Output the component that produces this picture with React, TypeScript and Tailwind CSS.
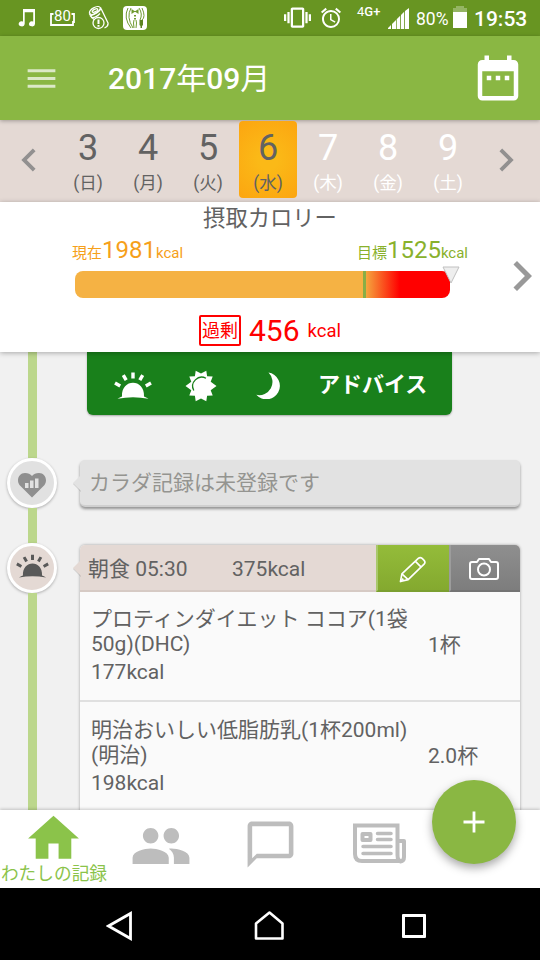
import clsx from 'clsx'
import {
  MdAlarm,
  MdChatBubbleOutline,
  MdChevronLeft,
  MdChevronRight,
  MdDateRange,
  MdHome,
  MdMenu,
  MdPeople,
  MdVibration,
} from 'react-icons/md'

const days = [
  { day: 3, week: '日' },
  { day: 4, week: '月' },
  { day: 5, week: '火' },
  { day: 6, week: '水', selected: true },
  { day: 7, week: '木', future: true },
  { day: 8, week: '金', future: true },
  { day: 9, week: '土', future: true },
]

const foods = [
  {
    lines: ['プロティンダイエット ココア(1袋', '50g)(DHC)'],
    kcal: '177kcal',
    amount: '1杯',
  },
  {
    lines: ['明治おいしい低脂肪乳(1杯200ml)', '(明治)'],
    kcal: '198kcal',
    amount: '2.0杯',
  },
]

function SunriseIcon({ className }: { className?: string }) {
  return (
    <svg viewBox="0 0 38 28" className={className} fill="currentColor">
      <path d="M8 24.500C7 6 31 6 30 24.500q2 .8 4.500 2.300Q19 23.600 3.500 26.800 6 25.300 8 24.500z" />
      <path
        d="M19 .5v6M9.300 3.200l2.900 5M28.700 3.200l-2.900 5M1 11l5.200 3M37 11l-5.200 3"
        fill="none"
        stroke="currentColor"
        strokeWidth="3.400"
      />
    </svg>
  )
}

function SunIcon() {
  return (
    <svg viewBox="0 0 32 32" className="size-8" fill="#fff">
      <path d="M16 3.500l5.300-2.700.8 5.500 5.600.2-2 5.200L31.500 16l-5.800 4.300 2 5.200-5.600.2-.8 5.500L16 28.500l-5.300 2.700-.8-5.500-5.600-.2 2-5.200L.5 16l5.800-4.300-2-5.200 5.600-.2.8-5.500z" />
      <path
        d="M8.800 20.500A9 9 0 0 1 21 8.300"
        fill="none"
        stroke="#19801b"
        strokeWidth="1.300"
      />
    </svg>
  )
}

function MoonIcon() {
  return (
    <svg viewBox="0 0 24 27" className="h-[27px] w-6" fill="#fff">
      <path d="M12.500.5a13.500 13.500 0 1 1-12.200 22.300A13.200 13.200 0 0 0 12.500.5z" />
    </svg>
  )
}

function StatusBar() {
  return (
    <div className="flex h-9 items-start bg-[#689522] text-white">
      <svg viewBox="0 0 18 18" className="mt-[9px] ml-[18px] size-[18px]" fill="#fff">
        <path d="M5 0h12v15a3 2.500 0 1 1-1.800-2.400V3.200H6.700V15A3 2.500 0 1 1 5 12.600z" />
      </svg>
      <div className="relative mt-[9px] ml-[14px] h-[18px] w-[26px]">
        <svg viewBox="0 0 26 18" className="h-[18px] w-[26px]" fill="none">
          <path
            d="M3.500 5H1v11h22v-3h1V5h-2.500"
            stroke="#fff"
            strokeWidth="1.800"
          />
        </svg>
        <span className="absolute top-0 left-[4px] text-[15px] leading-[14px]">
          80
        </span>
      </div>
      <svg viewBox="0 0 21 24" className="mt-[6px] ml-[12px] h-6 w-[21px]">
        <g fill="none" stroke="#fff" strokeWidth="1.300">
          <ellipse cx="7" cy="4.500" rx="6" ry="3" transform="rotate(-28 7 4.500)" />
          <ellipse cx="7" cy="4.500" rx="3" ry="1.200" transform="rotate(-28 7 4.500)" />
          <path d="M1.300 7.500q1.500 4 7-1 4-2 4.500-5M2 9.500l4 4M13 2.500l7 14.500q.5 3-3.500 5M3 11.500q4 1 9-4" />
          <circle cx="10.500" cy="17" r="5.500" />
        </g>
        <path d="M10.500 13.500v4.500M10.500 19v1.800" stroke="#fff" strokeWidth="2" />
      </svg>
      <svg viewBox="0 0 24 24" className="mt-[6px] ml-[14px] size-6">
        <rect width="24" height="24" rx="4" fill="#fff" />
        <g fill="none" stroke="#6f9a30" strokeWidth="1">
          <path d="M5 2Q0 12 8 22M8 2q-5 9 2 20M19 2q4 9 0 12M16 2q4 6 1 12" />
          <path d="M11 14l-.5 3 .5 5M13 14l.5 3-.5 5" />
        </g>
        <path
          d="M8.500 3l3 2h1l3-2v5l-3-2h-1l-3 2zM11 9h2v1.500h-2zM11 12h2v1.500h-2z"
          fill="#6f9a30"
        />
        <path d="M16.500 14H20v5l-1 1v2h-1.500v-2l-1-1z" fill="#5c8422" />
      </svg>

      <MdVibration className="mt-[4px] ml-[137px] size-[27px]" />
      <MdAlarm className="mt-[6px] ml-[8px] size-6" />
      <span className="mt-[5px] ml-[14px] w-[26px] text-[13px] leading-[14px]">
        4<span className="font-medium">G+</span>
      </span>
      <svg viewBox="0 0 21 21" className="mt-[8px] ml-[5px] size-[21px]" fill="#fff">
        <path d="M0 21v-1l3-3v4zM4 21v-5l4-4v9zM8.700 21V11.300l3.500-3.500V21zM13 21V7l3.200-3.200V21zM17 21V3l4-3v21z" />
      </svg>
      <span className="mt-[9px] ml-[7px] w-[34px] text-[17.500px] leading-5">
        80%
      </span>
      <svg viewBox="0 0 14 22" className="mt-[6px] ml-[3px] h-[22px] w-[14px]">
        <path d="M3 0h8v2h3v5H0V2h3z" fill="#fff" opacity=".3" />
        <path d="M0 6h14v16H0z" fill="#fff" />
      </svg>
      <span className="mt-[8px] ml-[7px] text-[21px] leading-[22px] font-medium">
        19:53
      </span>
    </div>
  )
}

function Header() {
  return (
    <header className="relative z-20 flex h-[84px] items-center bg-[#8ab743] text-white shadow-[0_1px_4px_rgba(0,0,0,0.3)]">
      <MdMenu className="ml-[23px] size-[37px] opacity-70" />
      <h1 className="mt-[2px] ml-12 flex-1 text-[30px] leading-9 font-medium">
        2017<span className="font-normal">年</span>09
        <span className="font-normal">月</span>
      </h1>
      <MdDateRange className="mr-[15px] size-[54px]" />
    </header>
  )
}

function DateStrip() {
  return (
    <div className="flex h-[82px] bg-[#e4d9d4] text-[#626262]">
      <MdChevronLeft className="mt-[17px] ml-[6px] size-[46px] text-[#929090]" />
      <div className="ml-[6px] flex">
        {days.map((d) => (
          <div
            key={d.day}
            className={clsx(
              'mx-px mt-px flex h-[77px] w-[58px] flex-col items-center rounded-[4px]',
              d.selected &&
                'relative z-20 bg-[radial-gradient(circle,#fbb917_20%,#fca510_100%)]',
              d.future && 'text-white'
            )}
          >
            <span className="mt-[9px] text-[36px] leading-9">{d.day}</span>
            <span className="mt-[7px] text-[17.500px] leading-5">({d.week})</span>
          </div>
        ))}
      </div>
      <MdChevronRight className="mt-[17px] ml-[5px] size-[46px] text-[#929090]" />
    </div>
  )
}

function CaloriePanel() {
  return (
    <section className="relative z-10 h-[150px] bg-white shadow-[0_1px_5px_rgba(0,0,0,0.3)]">
      <div className="flex h-full">
        <div className="ml-[72px] flex w-[396px] shrink-0 flex-col">
          <h2 className="mt-[2px] text-center text-[22.300px] leading-7 text-[#626262]">
            摂取カロリー
          </h2>
          <div className="mt-[4px] flex h-7 justify-between text-[15px] leading-7">
            <p className="text-[#f6a01a]">
              現在<span className="text-[24px]">1981</span>kcal
            </p>
            <p className="text-[#89b12c]">
              目標<span className="text-[24px]">1525</span>kcal
            </p>
          </div>
          <div className="relative mt-[7px] ml-[3px] flex h-[27px] w-[375px]">
            <div className="w-[288px] rounded-l-[8px] bg-[#f5b244]" />
            <div className="w-[3px] bg-[#88ae46]" />
            <div className="flex-1 rounded-r-[8px] bg-[linear-gradient(90deg,#f5a63e_0%,#ff0000_40%)]" />
            <svg viewBox="0 0 18 18" className="absolute -top-[5px] left-[367px] size-[18px]">
              <path d="M1 1h16L9 17z" fill="#eee" stroke="#c0c0c0" />
            </svg>
          </div>
          <div className="mt-[15px] flex items-center justify-center text-[#f00]">
            <span className="h-[31px] w-[42px] rounded-[2px] border-2 border-[#f00] text-center text-[18px] leading-7">
              過剰
            </span>
            <span className="mt-[2px] ml-2 text-[30px] leading-8">456</span>
            <span className="mt-[2px] ml-2 text-[18.500px] leading-8">kcal</span>
          </div>
        </div>
        <MdChevronRight className="mt-[44px] ml-[24px] size-[60px] shrink-0 text-[#999]" />
      </div>
    </section>
  )
}

function Tail({ color }: { color: string }) {
  return (
    <svg viewBox="0 0 8 18" className="absolute top-[14px] -left-[7px] h-[18px] w-2">
      <path d="M8 3L0 10l8 8z" fill="#000" opacity=".15" />
      <path d="M8 1L0 9l8 8z" fill={color} />
    </svg>
  )
}

function Timeline() {
  return (
    <section className="flex h-[458px] overflow-hidden bg-[#f1f1f1]">
      <div className="flex w-16 flex-col items-center">
        <div className="h-[106px] w-[9px] bg-[#bcd78c]" />
        <div className="flex size-[50px] items-center justify-center rounded-full border-[3px] border-white bg-[#e1e1e1] shadow-[0_1px_3px_rgba(0,0,0,0.3)]">
          <svg viewBox="0 0 30 26" className="mt-1 h-[26px] w-[30px]">
            <path
              d="M15 25.500L2.500 13C-1 8 2 1 8 1c3 0 5.500 1 7 3 1.500-2 4-3 7-3 6 0 9 7 5.500 12z"
              fill="#8f8f8f"
            />
            <path d="M8 16v-5h3.500v5zM13 16V8.500h3.500V16zM18 16V6.500h3.500V16z" fill="#e1e1e1" />
          </svg>
        </div>
        <div className="h-[35px] w-[9px] bg-[#bcd78c]" />
        <div className="flex size-[50px] items-center justify-center rounded-full border-[3px] border-white bg-[#e4d9d4] shadow-[0_1px_3px_rgba(0,0,0,0.3)]">
          <SunriseIcon className="-mt-[3px] h-[25px] w-[33px] text-[#595959]" />
        </div>
        <div className="w-[9px] flex-1 bg-[#bcd78c]" />
      </div>

      <div className="ml-4 flex w-[440px] flex-col">
        <div className="ml-[7px] flex h-[63px] w-[365px] shrink-0 items-start rounded-b-[6px] bg-[#19801b] text-white shadow-[0_1px_2px_rgba(0,0,0,0.3)]">
          <SunriseIcon className="mt-[20px] ml-[27px] h-[28px] w-[38px]" />
          <div className="mt-[18px] ml-[33px]">
            <SunIcon />
          </div>
          <div className="mt-[20px] ml-[39px]">
            <MoonIcon />
          </div>
          <span className="mt-[17px] ml-[38px] text-[22px] leading-8 font-bold">
            アドバイス
          </span>
        </div>

        <div className="relative mt-[45px] h-[47px] shrink-0 rounded-[5px] border-b-2 border-[#cfcfcf] bg-[#e2e2e2] pl-[9px] text-[21px] leading-[47px] text-[#949490] shadow-[0_2px_3px_rgba(0,0,0,0.4)]">
          <Tail color="#e2e2e2" />
          カラダ記録は未登録です
        </div>

        <div className="relative mt-[38px] shrink-0 rounded-[5px] bg-[#fafafa] text-[21px] text-[#626262] shadow-[0_0_3px_rgba(0,0,0,0.35)]">
          <Tail color="#e4d9d4" />
          <div className="flex h-[47px] overflow-hidden rounded-t-[5px] bg-[#e4d9d4] leading-[49px]">
            <div className="flex flex-1 border-b-2 border-[#d6cac4] pl-[8px]">
              <span className="w-[144px]">朝食 05:30</span>
              <span>375kcal</span>
            </div>
            <button className="flex w-[73px] items-center justify-center border-b-2 border-l-2 border-b-[#7b9f30] border-l-[#a9c86b] bg-linear-to-b from-[#94bc3a] to-[#84a92f]">
              <svg
                viewBox="0 0 28 28"
                className="mt-[3px] mr-[3px] size-[27px]"
                fill="none"
                stroke="#fff"
                strokeWidth="1.700"
                strokeLinejoin="round"
              >
                <path d="M1.500 26.500l1.500-8L20 2.500q2-1.800 4 0l2 2q1.800 2 0 4L9.500 24.500z" />
                <path d="M3 18.500l6.500 6M17 5.500l6 6M1.500 26.500l3-3" />
              </svg>
            </button>
            <button className="flex w-[71px] items-center justify-center border-b-2 border-l-2 border-b-[#747474] border-l-[#9c9c9c] bg-linear-to-b from-[#8f8f8f] to-[#7d7d7d]">
              <svg
                viewBox="0 0 30 22"
                className="mt-[2px] mr-[4px] h-[22px] w-[30px]"
                fill="none"
                stroke="#fff"
                strokeWidth="2"
                strokeLinejoin="round"
              >
                <path d="M3 4h5l2-3h10l2 3h5q2 0 2 2v13q0 2-2 2H3q-2 0-2-2V6q0-2 2-2z" />
                <circle cx="15" cy="11.500" r="6" />
              </svg>
            </button>
          </div>
          {foods.map((food, i) => (
            <div
              key={food.kcal}
              className={clsx(
                'flex items-center pl-[11px]',
                i === 0
                  ? 'h-[110px] border-b-2 border-[#e0e0e0]'
                  : 'h-[112px] pb-[2px]'
              )}
            >
              <div className="-mt-px w-[337px] leading-[25px]">
                {food.lines.map((line) => (
                  <p key={line} className="whitespace-nowrap">
                    {line}
                  </p>
                ))}
                <p className="mt-[3px]">{food.kcal}</p>
              </div>
              <span>{food.amount}</span>
            </div>
          ))}
        </div>
      </div>
    </section>
  )
}

function TabBar() {
  return (
    <nav className="relative z-10 flex h-[78px] bg-white text-[#bdbdbd] shadow-[0_-1px_3px_rgba(0,0,0,0.2)]">
      <div className="flex w-[108px] flex-col items-center text-[#8bc34a]">
        <MdHome className="-mt-[2px] -ml-px size-[61px] shrink-0" />
        <span className="-mt-[5px] text-[17.700px] leading-5 whitespace-nowrap">
          わたしの記録
        </span>
      </div>
      <MdPeople className="mt-[5px] ml-[22px] size-[62px]" />
      <MdChatBubbleOutline className="mt-[7px] ml-[51px] size-[55px]" />
      <svg
        viewBox="0 0 54 41"
        className="mt-[13px] ml-[55px] h-[41px] w-[54px]"
        fill="none"
        stroke="currentColor"
        strokeWidth="4"
        strokeLinecap="round"
      >
        <path d="M2 2.500h42.500V32q0 6 3.500 6H9q-7 0-7-7z" strokeLinecap="butt" />
        <path d="M45 18h6v16q0 4-3.500 4.500" strokeLinejoin="round" />
        <path d="M9.500 11h8v6h-8z" strokeLinejoin="round" />
        <path d="M24.500 10.500H38M24.500 16.500H38M10 23.500h28M10 30.500h28" strokeWidth="3.500" />
      </svg>
      <button className="absolute -top-[30px] right-[24px] flex size-[84px] items-center justify-center rounded-full bg-[#8ab743] shadow-[0_4px_10px_rgba(0,0,0,0.35)]">
        <svg viewBox="0 0 22 22" className="size-[22px]" stroke="#fff" strokeWidth="2.800">
          <path d="M11 .5v21M.5 11h21" />
        </svg>
      </button>
    </nav>
  )
}

function SystemNav() {
  return (
    <div className="flex h-[72px] bg-black">
      <svg viewBox="0 0 26 30" className="mt-[23px] ml-[106px] h-[30px] w-[26px]" fill="none">
        <path d="M24.500 2.500v25L2.500 15z" stroke="#fff" strokeWidth="2.800" />
      </svg>
      <svg viewBox="0 0 30 31" className="mt-[22px] ml-[122px] h-[31px] w-[30px]" fill="none">
        <path
          d="M2 13.500L15.500 2.500 28.500 13.500V28.500H2z"
          stroke="#fff"
          strokeWidth="2.600"
          strokeLinejoin="round"
        />
      </svg>
      <div className="mt-[26px] ml-[118px] size-6 rounded-[1px] border-[3px] border-white" />
    </div>
  )
}

export default function App() {
  return (
    <div className="h-[960px] w-[540px] overflow-hidden font-[Roboto,'Noto_Sans_CJK_JP',sans-serif]">
      <StatusBar />
      <Header />
      <DateStrip />
      <CaloriePanel />
      <Timeline />
      <TabBar />
      <SystemNav />
    </div>
  )
}
